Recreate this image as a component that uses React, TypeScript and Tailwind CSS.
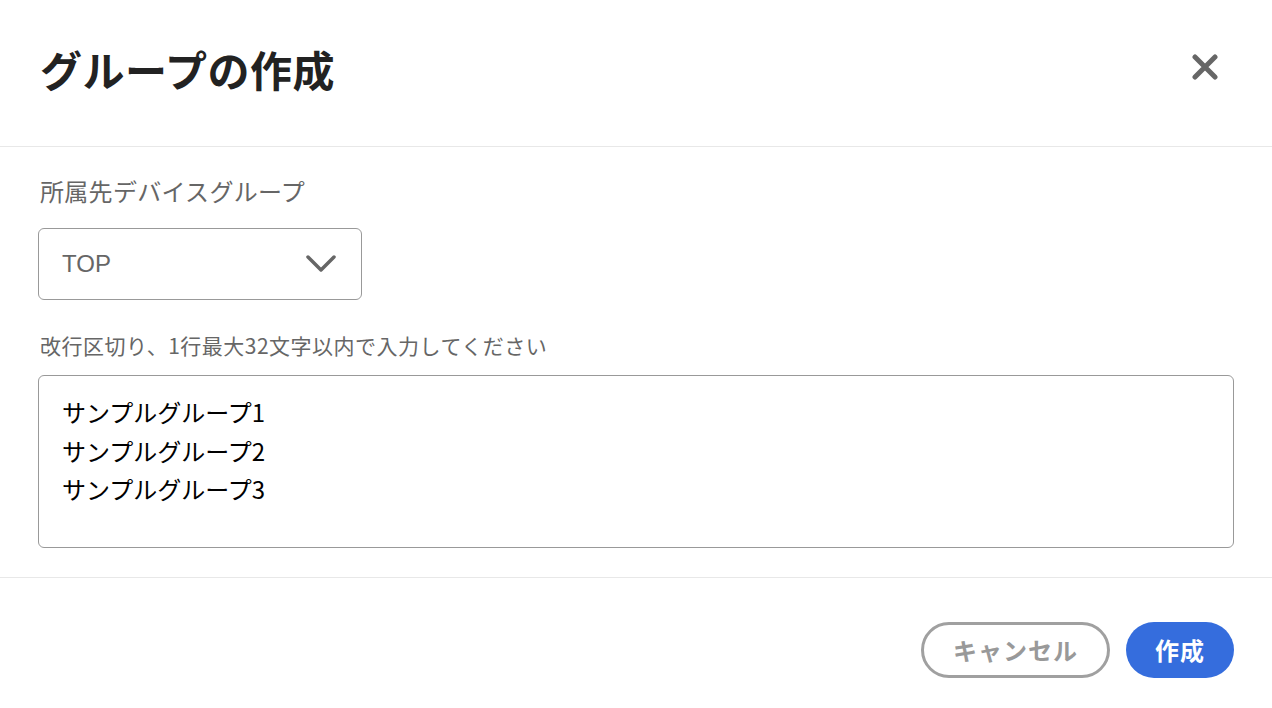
import { useState } from "react";

const jp = { fontFamily: '"Noto Sans CJK JP", "Noto Sans", sans-serif' };

const CloseIcon = () => (
    <svg width="26" height="26" viewBox="0 0 26 26" aria-hidden>
        <path d="M3 3 L23 23 M23 3 L3 23" stroke="#666" strokeWidth="5" strokeLinecap="round" fill="none" />
    </svg>
);

const Chevron = () => (
    <svg width="30" height="20" viewBox="0 0 30 20" aria-hidden>
        <polyline points="2,3 15,16 28,3" stroke="#666" strokeWidth="3.5" strokeLinecap="round" strokeLinejoin="round" fill="none" />
    </svg>
);

export default function App() {
    const [groups, setGroups] = useState("サンプルグループ1\nサンプルグループ2\nサンプルグループ3");

    return (
        <div className="w-[1272px] h-[708px] bg-white flex flex-col" style={jp}>
            <div className="h-[147px] flex items-center justify-between pl-[40px] pr-[54px] border-b border-[#e8e8e8]">
                <h1 className="text-[42px] font-bold text-[#222] leading-none tracking-[0.5px] -mt-[8px]">グループの作成</h1>
                <button className="-mt-[12px]" aria-label="閉じる">
                    <CloseIcon />
                </button>
            </div>

            <div className="flex flex-col px-[38px] pt-[26px] pb-[29px] border-b border-[#e8e8e8]">
                <label className="pl-[2px] text-[24px] leading-[36px] text-[#666] tracking-[0.3px]">所属先デバイスグループ</label>
                <div className="mt-[19px] w-[324px] h-[72px] border border-[#999] rounded-[6px] flex items-center justify-between pl-[23px] pr-[25px]">
                    <span className="text-[24px] text-[#666]" style={{ fontFamily: '"Liberation Sans", "Noto Sans CJK JP", sans-serif' }}>TOP</span>
                    <Chevron />
                </div>
                <p className="mt-[30px] pl-[2px] text-[21px] leading-[30px] text-[#666] tracking-[0.5px]">改行区切り、1行最大32文字以内で入力してください</p>
                <textarea
                    className="mt-[15px] h-[173px] w-full border border-[#999] rounded-[6px] pl-[23px] pt-[17px] text-[24px] leading-[38.5px] text-black resize-none outline-none"
                    value={groups}
                    onChange={(e) => setGroups(e.target.value)}
                />
            </div>

            <div className="flex justify-end gap-[16px] px-[38px] pt-[44px]">
                <button className="w-[189px] h-[56px] rounded-full border-[3px] border-[#a0a0a0] text-[24px] font-bold text-[#999] tracking-[1px]">キャンセル</button>
                <button className="w-[108px] h-[56px] rounded-full bg-[#356ddd] text-[24px] font-bold text-white tracking-[1px]">作成</button>
            </div>
        </div>
    );
}
